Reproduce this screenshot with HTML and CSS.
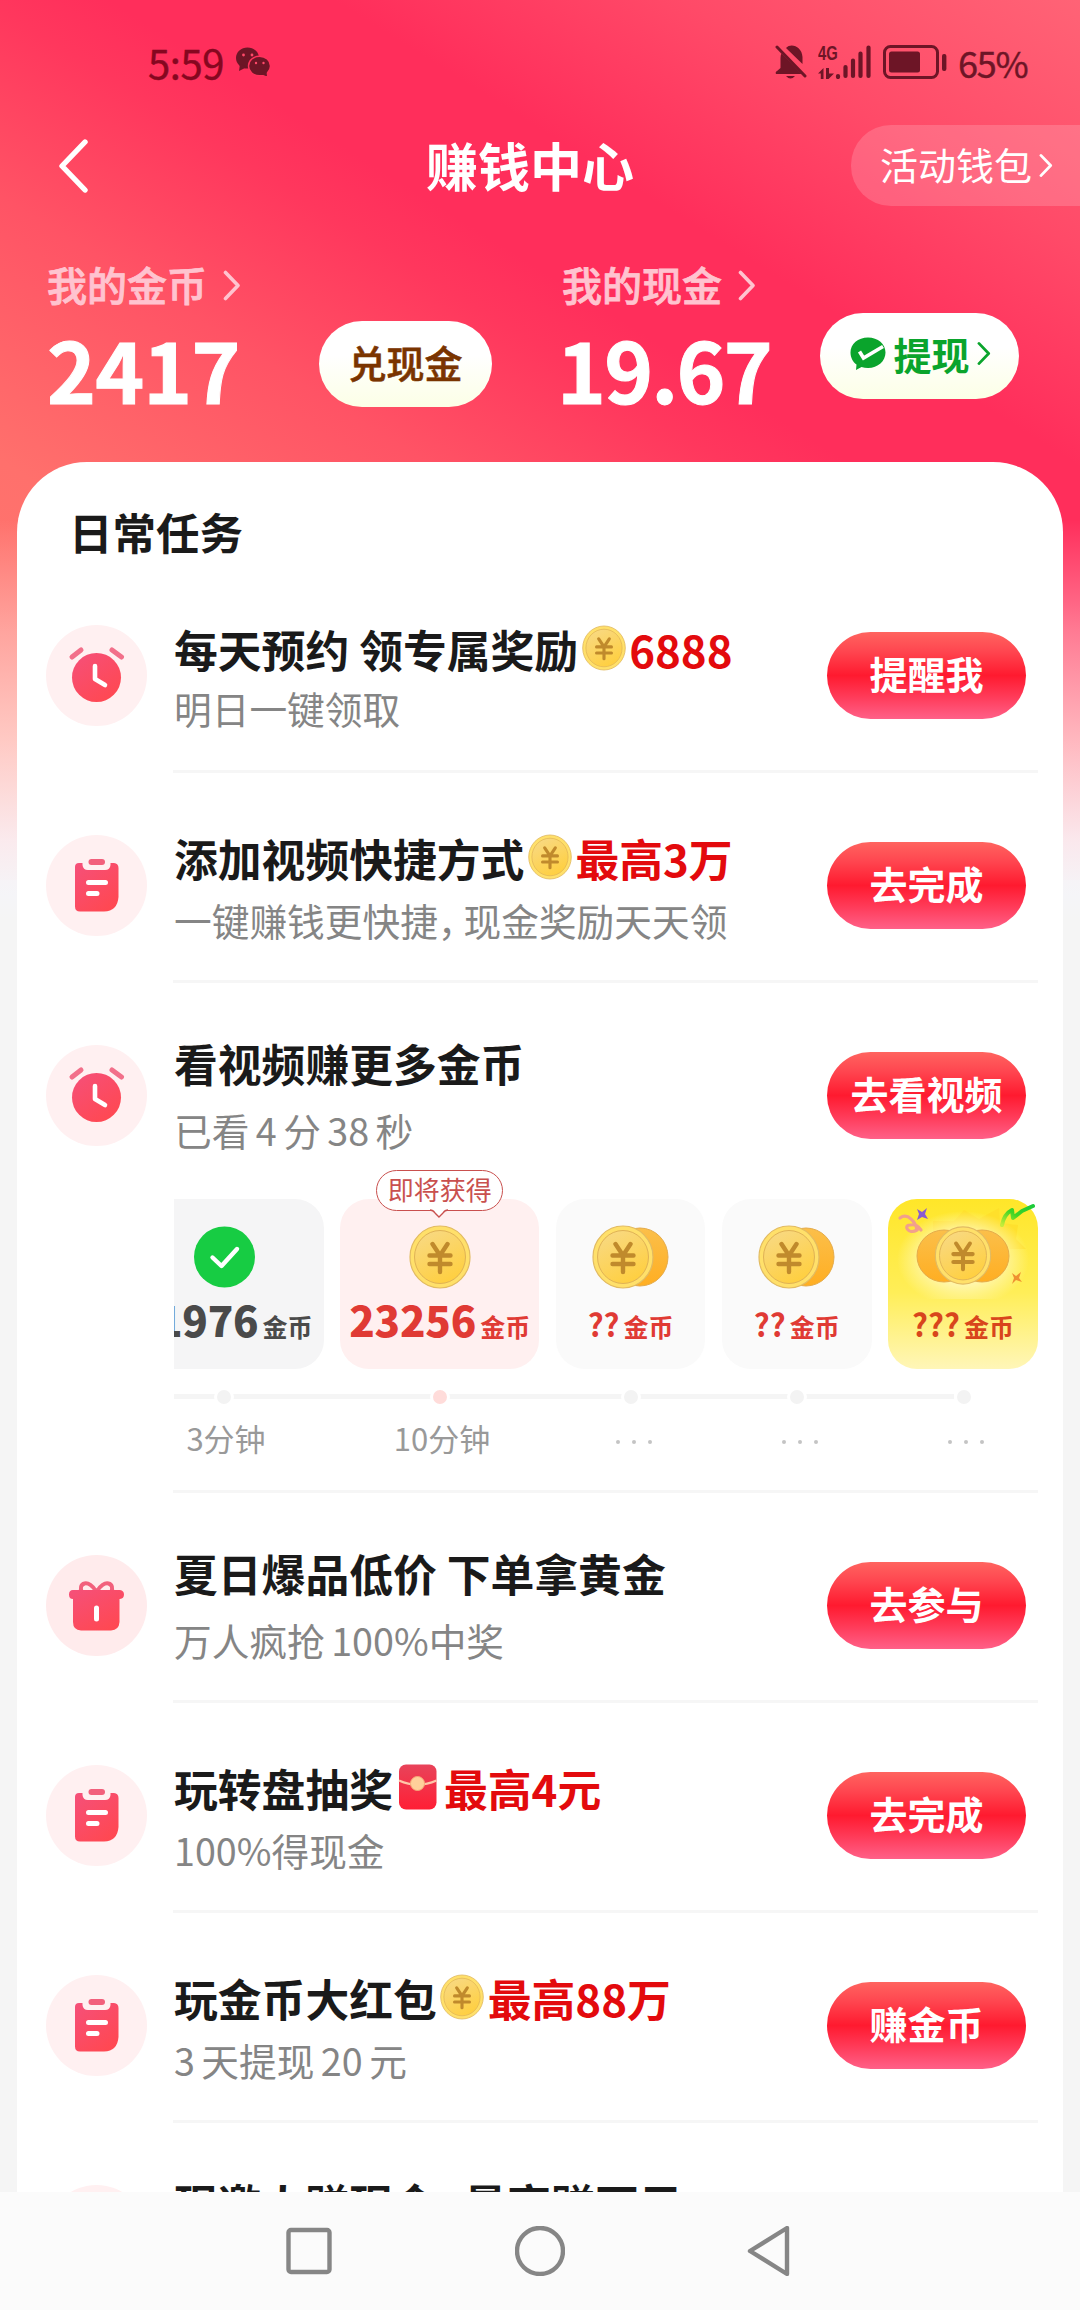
FILE: index.html
```html
<!DOCTYPE html>
<html lang="zh-CN">
<head>
<meta charset="utf-8">
<title>赚钱中心</title>
<link rel="stylesheet" href="styles.css">
</head>
<body>
<svg class="defs" width="0" height="0" aria-hidden="true">
  <defs>
    <linearGradient id="g-red" x1="0" y1="0" x2="0.7" y2="1"><stop offset="0" stop-color="#f5507a"/><stop offset="1" stop-color="#ff4852"/></linearGradient>
    <linearGradient id="g-coin" x1="0.2" y1="0" x2="0.7" y2="1"><stop offset="0" stop-color="#f8d983"/><stop offset="1" stop-color="#ffcf3e"/></linearGradient>
    <linearGradient id="g-back" x1="0" y1="0" x2="0" y2="1"><stop offset="0" stop-color="#fbbf4a"/><stop offset="1" stop-color="#ffae22"/></linearGradient>
    <linearGradient id="g-env" x1="0" y1="0" x2="0" y2="1"><stop offset="0" stop-color="#e8435a"/><stop offset="1" stop-color="#ff1f35"/></linearGradient>
    <linearGradient id="g-ribbon" x1="0" y1="1" x2="1" y2="0"><stop offset="0" stop-color="#c6ec3a"/><stop offset="0.5" stop-color="#3fd423"/><stop offset="1" stop-color="#1ccb3a"/></linearGradient>
    <radialGradient id="g-glow"><stop offset="0.55" stop-color="#fff6a8"/><stop offset="1" stop-color="#fff6a8" stop-opacity="0"/></radialGradient>
    <symbol id="coin" viewBox="0 0 62 64">
      <ellipse cx="31" cy="32" rx="30" ry="31" fill="#ffe06a" stroke="#e2bb62" stroke-width="1.2"/>
      <ellipse cx="31" cy="32" rx="25.5" ry="26.5" fill="url(#g-coin)" stroke="#e0b255" stroke-width="1"/>
      <path d="M23.500 19 31 30.500 38.500 19M31 30.500V47M20.500 30.500H41.500M20.500 39H41.500" fill="none" stroke="#c08a2c" stroke-width="4.400" stroke-linecap="round"/>
    </symbol>
    <symbol id="coins" viewBox="0 0 77 64">
      <ellipse cx="48" cy="32" rx="28" ry="29" fill="url(#g-back)" stroke="#e5ab4a" stroke-width="1"/>
      <use href="#coin" x="0" y="0" width="62" height="64"/>
    </symbol>
    <symbol id="clock" viewBox="0 0 101 101">
      <path d="M26 32 35 25M75.500 32 66 25" stroke="#f2708a" stroke-width="5" stroke-linecap="round"/>
      <circle cx="50.500" cy="52.500" r="24.500" fill="url(#g-red)"/>
      <path d="M49 41V54L59 60" fill="none" stroke="#fff" stroke-width="4.600" stroke-linecap="round" stroke-linejoin="round"/>
    </symbol>
    <symbol id="board" viewBox="0 0 101 101">
      <path d="M33 28H36.500V30Q37 35 42 35H59Q64 35 64.500 30V28H68Q72.500 28.500 72.500 33V62Q71.500 76 58 76.500H34Q29 76.500 29 71.500V32Q29 28 33 28Z" fill="url(#g-red)"/>
      <rect x="42.500" y="24" width="16.500" height="6" rx="3" fill="#f2607c"/>
      <path d="M42.500 47.500H59.500M42.500 58.500H51" stroke="#fff" stroke-width="5" stroke-linecap="round"/>
    </symbol>
    <symbol id="gift" viewBox="0 0 101 101">
      <path d="M36 38C31 28 43 23 50.500 37C58 23 70 28 65 38" fill="none" stroke="#f2607c" stroke-width="4"/>
      <path d="M27 35H74Q78 35.500 78 39.500T74 44H73.500V67Q73 75 65 75.500H35Q27 75 27 67V44Q23 44 23 39.500T27 35Z" fill="url(#g-red)"/>
      <path d="M50.500 53V64" stroke="#fff" stroke-width="5" stroke-linecap="round"/>
    </symbol>
    <symbol id="chev" viewBox="0 0 18 30"><path d="M2.500 2 15 15 2.500 28" fill="none" stroke="currentColor" stroke-width="3.600" stroke-linecap="round" stroke-linejoin="round"/></symbol>
  </defs>
</svg>

<main class="screen">
  <header class="hero">
    <div class="status">
      <span class="time">5:59</span>
      <svg class="wechat" viewBox="0 0 34 29"><ellipse cx="11.500" cy="11" rx="11.500" ry="10.500"/><path d="M4 17 3 24 11 20Z"/><ellipse cx="23.500" cy="19" rx="11" ry="9.800" stroke="#ff335c" stroke-width="1.400"/><path d="M25 27 31 29.500 30.500 24Z"/><g fill="#ff4a6a"><circle cx="7.500" cy="8" r="1.400"/><circle cx="16" cy="8" r="1.400"/><circle cx="20" cy="16" r="1.200"/><circle cx="27.500" cy="16" r="1.200"/></g></svg>
      <span class="grow"></span>
      <svg class="bell" viewBox="0 0 32 35"><path d="M11 4C16-1.500 27 2.500 27.500 13V20ZM6.500 9.500 26.500 30H1Q0 28 2 27L5.500 24V14Q5.500 11 6.500 9.500ZM11 32H20Q15.500 37 11 32Z"/><path class="slash" d="M2 3 30 32"/></svg>
      <div class="net"><span>4G</span><svg viewBox="0 0 16 11"><path d="M0 5.500 5.500 0V11H2.800V5.500ZM8 0H11V5.500H16L10.500 11H8Z"/></svg></div>
      <svg class="bars" viewBox="0 0 36 34"><path d="M3 32V31M10.500 31V22M18 31V15.500M25.500 31V8.500M33.500 31V2.500" fill="none" stroke-width="4.200" stroke-linecap="round"/></svg>
      <svg class="battery" viewBox="0 0 64 34"><rect x="1.500" y="1.500" width="53" height="31" rx="6" fill="none" stroke-width="3"/><rect x="6" y="6.500" width="31" height="21" rx="2.500"/><rect x="59" y="9" width="4.400" height="17" rx="2"/></svg>
      <span class="pct">65%</span>
    </div>
    <div class="topbar">
      <svg class="back" viewBox="0 0 30 54"><path d="M27 3 4 27 27 51" fill="none" stroke="#fff" stroke-width="5.400" stroke-linecap="round" stroke-linejoin="round"/></svg>
      <h1>赚钱中心</h1>
      <a class="wallet">活动钱包<svg class="chev-w"><use href="#chev"/></svg></a>
    </div>
    <div class="balances">
      <div class="bal coins-bal">
        <div class="label">我的金币<svg class="chev-b"><use href="#chev"/></svg></div>
        <div class="num">2417</div>
      </div>
      <a class="pill exchange">兑现金</a>
      <div class="bal cash-bal">
        <div class="label">我的现金<svg class="chev-b"><use href="#chev"/></svg></div>
        <div class="num cash">19.67</div>
      </div>
      <a class="pill withdraw"><svg class="pay" viewBox="0 0 36 33"><path d="M18 0.500C28 0.500 35.500 7 35.500 15.500S28 31 18 31Q14.500 31 11.500 30L6 33 6.500 27.500C2.500 25 0.500 20 0.500 15.500C0.500 7 8 0.500 18 0.500Z"/><path d="M9.500 14.500 13.500 21 33 9.500" fill="none" stroke="#fff" stroke-width="3.600"/></svg>提现<svg class="chev-p"><use href="#chev"/></svg></a>
    </div>
  </header>

  <section class="card">
    <h2>日常任务</h2>

    <article class="task remind">
      <svg class="icon"><use href="#clock"/></svg>
      <div class="body"><h3>每天预约 领专属奖励<svg class="coin-i"><use href="#coin"/></svg><em>6888</em></h3><p>明日一键领取</p></div>
      <a class="btn">提醒我</a>
    </article>

    <article class="task">
      <svg class="icon"><use href="#board"/></svg>
      <div class="body"><h3>添加视频快捷方式<svg class="coin-i"><use href="#coin"/></svg><em>最高3万</em></h3><p>一键赚钱更快捷<span class="comma">，</span>现金奖励天天领</p></div>
      <a class="btn">去完成</a>
    </article>

    <article class="task plain watch">
      <svg class="icon"><use href="#clock"/></svg>
      <div class="body"><h3>看视频赚更多金币</h3><p>已看 4 分 38 秒</p></div>
      <a class="btn">去看视频</a>
      <div class="track">
        <div class="step done"><svg class="pic" viewBox="0 0 61 61"><circle cx="30.500" cy="30.500" r="30.500" fill="#17cc43"/><path d="M18.500 31 27.500 39.500 43 22.500" fill="none" stroke="#fff" stroke-width="4.400" stroke-linecap="round" stroke-linejoin="round"/></svg><div class="amt"><b>1976</b>金币</div></div>
        <div class="step next"><div class="tip">即将获得<svg viewBox="0 0 18 10"><path d="M0 1Q3 1 5 4L9 8 13 4Q15 1 18 1" fill="#fff" stroke="#c9504e" stroke-width="1.300"/></svg></div><svg class="pic"><use href="#coin"/></svg><div class="amt"><b>23256</b>金币</div></div>
        <div class="step"><svg class="pic two"><use href="#coins"/></svg><div class="amt"><i>??</i>金币</div></div>
        <div class="step"><svg class="pic two"><use href="#coins"/></svg><div class="amt"><i>??</i>金币</div></div>
        <div class="step gold">
          <svg class="party" viewBox="0 0 150 100">
            <path d="M45 22 66 22 76 11 91 20 111 9 112 24 130 26 128 40 138 50H45Z" fill="#ffdd2a" opacity="0.7"/>
            <ellipse cx="75" cy="60" rx="66" ry="48" fill="url(#g-glow)"/>
            <ellipse cx="56" cy="57" rx="27" ry="26" fill="url(#g-back)" stroke="#e5ab4a"/><ellipse cx="94" cy="57" rx="27" ry="26" fill="url(#g-back)" stroke="#e5ab4a"/>
            <use href="#coin" x="46" y="27" width="58" height="59"/>
            <path d="M12 19C20 13 28 24 29 31C20 36 15 26 22 26C28 25 30 27 33 31" fill="none" stroke="#f2a08c" stroke-width="3.200" stroke-linecap="round"/>
            <path d="M29 10 34 13 39 9 37 15 40 20 34 18 29 21 31 15Z" fill="#8a5bd0"/>
            <path d="M114 26C116 16 122 12 124 11L125 19 134 12 145 7" fill="none" stroke="url(#g-ribbon)" stroke-width="4" stroke-linecap="round" stroke-linejoin="round"/>
            <path d="M124 74 128 77 133 73 131 79 134 83 128 81 124 85 126 79Z" fill="#ef9030"/>
          </svg>
          <div class="amt"><i>???</i>金币</div>
        </div>
      </div>
      <div class="line"><span></span><span class="hot"></span><span></span><span></span><span></span></div>
      <div class="times"><span>3分钟</span><span>10分钟</span><span class="dots"><i></i><i></i><i></i></span><span class="dots"><i></i><i></i><i></i></span><span class="dots"><i></i><i></i><i></i></span></div>
    </article>

    <article class="task plain">
      <svg class="icon deep"><use href="#gift"/></svg>
      <div class="body"><h3>夏日爆品低价 下单拿黄金</h3><p>万人疯抢 100%中奖</p></div>
      <a class="btn">去参与</a>
    </article>

    <article class="task">
      <svg class="icon"><use href="#board"/></svg>
      <div class="body"><h3>玩转盘抽奖<svg class="coin-i" viewBox="0 0 44 46"><rect x="3" y="0.500" width="37.500" height="45" rx="7" fill="url(#g-env)"/><path d="M3 16.500Q21.500 25 40.500 16.500" fill="none" stroke="#ffc6a8" stroke-width="2"/><circle cx="21.500" cy="19.500" r="7" fill="#ffcf9a" stroke="#f5a878"/></svg><em>最高4元</em></h3><p>100%得现金</p></div>
      <a class="btn">去完成</a>
    </article>

    <article class="task">
      <svg class="icon"><use href="#board"/></svg>
      <div class="body"><h3>玩金币大红包<svg class="coin-i"><use href="#coin"/></svg><em>最高88万</em></h3><p>3 天提现 20 元</p></div>
      <a class="btn">赚金币</a>
    </article>

    <article class="task plain">
      <svg class="icon"><use href="#clock"/></svg>
      <div class="body"><h3>现邀人赚现金<span class="comma big">，</span>最高赚万元</h3></div>
    </article>
  </section>

  <nav class="nav">
    <svg viewBox="0 0 50 50"><rect x="4.500" y="4" width="41" height="42" rx="2.500"/></svg>
    <svg viewBox="0 0 50 50"><circle cx="25" cy="25" r="23"/></svg>
    <svg viewBox="0 0 50 50"><path d="M41 2V48L4 25Z"/></svg>
  </nav>
</main>
</body>
</html>
```
FILE: styles.css
```css
* { box-sizing: border-box; }
body {
  margin: 0;
  font-family: "Noto Sans CJK SC", "Noto Sans", sans-serif;
  background: #f5f5f5;
  color: #1a1a1a;
}
h1, h2, h3, p { margin: 0; }
em, i { font-style: normal; }
.defs { position: absolute; }
.grow { flex: 1; }

.screen {
  width: 1080px;
  height: 2310px;
  overflow: hidden;
  display: flex;
  flex-direction: column;
  background:
    linear-gradient(180deg, rgba(255,240,236,0) 520px, rgba(255,240,236,.38) 630px, rgba(255,240,236,.68) 740px, rgba(250,240,244,.95) 840px, #f5f5f8 895px, #f5f5f5 920px),
    linear-gradient(32deg, #ff7c70 0, #ff706c 27%, #ff5365 44%, #ff375d 56%, #ff2e5b 61%, #ff2e5b 70%, #ff4a68 84%, #ff6376 100%) 0 0 / 1080px 880px no-repeat,
    #f5f5f5;
}

/* Header */
.hero { height: 462px; flex: none; display: flex; flex-direction: column; color: #fff; }
.status { height: 122px; padding: 1px 52px 0 148px; display: flex; align-items: center; color: #6d1526; fill: #6d1526; stroke: none; line-height: 50px; }
.status svg { flex: none; }
.time { font-size: 40px; color: #860720; letter-spacing: -.4px; -webkit-text-stroke: .4px #860720; }
.wechat { width: 34px; height: 29px; margin-left: 12px; }
.bell { width: 32px; height: 35px; }
.slash { stroke: #6d1526; stroke-width: 3px; stroke-linecap: round; }
.net { width: 19px; height: 34px; margin-left: 11px; display: flex; flex-direction: column; justify-content: space-between; }
.net span { font: 700 20px/17px "Liberation Sans", sans-serif; transform: scaleX(.74); transform-origin: left; }
.net svg { width: 16px; height: 11px; }
.bars { width: 36px; height: 34px; margin-left: -2px; stroke: #6d1526; }
.battery { width: 64px; height: 34px; margin-left: 12px; stroke: #6d1526; }
.battery rect:not([fill]) { stroke: none; }
.pct { font-size: 36px; margin-left: 11px; letter-spacing: -1.200px; width: 70px; white-space: nowrap; -webkit-text-stroke: .4px #6d1526; }

.topbar { height: 90px; display: grid; grid-template-columns: 310px 1fr 229px; align-items: center; }
.back { width: 30px; height: 54px; margin: -3px 0 0 58px; }
h1 { font-size: 52px; line-height: 80px; font-weight: 700; text-align: center; margin: -5px 101px 0 0; }
.wallet { height: 81px; border-radius: 40px 0 0 40px; background: rgba(255,255,255,.17); padding: 0 0 3px 29px; display: flex; align-items: center; font-size: 38px; line-height: 76px; margin-top: -3px; white-space: nowrap; }
.chev-w { width: 14px; height: 25px; margin: 2px 0 0 7px; }

.balances { flex: 1; padding-left: 47px; display: flex; align-items: flex-start; }
.bal { padding-top: 44px; }
.coins-bal { width: 272px; }
.cash-bal { width: 258px; margin-left: 70px; }
.label { display: flex; align-items: center; font-size: 40px; font-weight: 500; line-height: 56px; color: #ffc3cf; -webkit-text-stroke: .8px #ffc3cf; }
.chev-b { width: 18px; height: 31px; margin: 2px 0 0 16px; }
.num { font-size: 83px; line-height: 98px; font-weight: 700; white-space: nowrap; letter-spacing: -.8px; margin-top: 7px; -webkit-text-stroke: 1px #fff; }
.cash { letter-spacing: -1.800px; margin-left: -5px; }
.pill { display: flex; align-items: center; justify-content: center; height: 86px; border-radius: 43px; background: linear-gradient(#fff 40%, #fcffe6); font-weight: 700; font-size: 38px; padding-bottom: 5px; white-space: nowrap; }
.exchange { width: 173px; margin-top: 109px; color: #7a3400; font-weight: 500; -webkit-text-stroke: .6px #7a3400; }
.withdraw { width: 199px; margin-top: 101px; color: #0aa42c; padding-left: 2px; }
.pay { width: 36px; height: 33px; fill: #0aa42c; margin-right: 7px; }
.chev-p { width: 14px; height: 25px; margin-left: 7px; }

/* Task card */
.card { flex: 1; min-height: 0; overflow: hidden; margin: 0 17px; padding: 0 25px 0 29px; background: #fff; border-radius: 70px 70px 0 0; }
h2 { font-size: 43.500px; line-height: 60px; height: 99px; padding: 40px 0 0 23px; font-weight: 700; }
.task { height: 210px; display: grid; grid-template-columns: 128px minmax(0, 1fr) 199px; padding-right: 12px; position: relative; align-items: start; }
.task::after { content: ""; position: absolute; left: 127px; right: 0; bottom: -2px; height: 3px; background: #f6f6f6; }
.icon { width: 101px; height: 101px; border-radius: 50%; background: #fff0f1; margin-top: 64px; }
.icon.deep { background: #ffebec; }
.body { padding-top: 61px; white-space: nowrap; }
.plain .body { padding-top: 56px; }
h3 { display: flex; align-items: center; font-size: 43.800px; line-height: 52px; height: 52px; font-weight: 700; white-space: pre; }
h3 em { color: #e30a0d; }
.coin-i { width: 44px; height: 46px; margin: -2px 3.500px 0; flex: none; }
p { font-size: 37.700px; line-height: 46px; margin-top: 13px; color: #858585; word-spacing: -2px; font-weight: 400; }
.plain p { margin-top: 18px; }
.remind .body { padding-top: 62px; }
.remind p { margin-top: 10px; }
.comma { margin-right: -12px; }
.comma.big { margin-right: -17px; }
.btn { height: 87px; margin-top: 71px; border-radius: 44px; display: flex; align-items: center; justify-content: center; padding-bottom: 6px; font-size: 38px; font-weight: 700; color: #fff; background: linear-gradient(#ff645f, #ff4650 22%, #ff1a2f 50%, #ff3a58 74%, #ff6088); }

/* Watch-time steps */
.watch { height: 510px; grid-template-rows: 218px 170px 1fr; }
.track { grid-column: 2 / 4; grid-row: 2; width: 866px; display: flex; gap: 16.700px; }
.step { position: relative; width: 149.500px; height: 170px; flex: none; border-radius: 29px; background: #fafafa; display: flex; flex-direction: column; align-items: center; color: #e03a34; }
.pic { width: 62px; height: 64px; margin-top: 26px; flex: none; }
.pic.two { width: 77px; }
.amt { display: flex; align-items: baseline; justify-content: center; gap: 4px; font-size: 25px; line-height: 50px; font-weight: 700; white-space: nowrap; margin-top: 5px; }
.amt b { font-size: 42px; letter-spacing: -.2px; }
.amt i { font-size: 31px; line-height: 54px; }
.done { background: #f5f5f6; border-radius: 0 29px 29px 0; color: #4a4a4a; overflow: hidden; align-items: flex-end; padding-right: 11px; }
.done .pic { margin-right: 58px; width: 61px; }
.next { width: 199px; background: #fff0f0; }
.tip { position: absolute; left: 36px; top: -29px; width: 127px; height: 41px; border: 1.500px solid #c9504e; border-radius: 21px; background: #fff; color: #c9504e; font-size: 26px; line-height: 36px; text-align: center; }
.tip svg { position: absolute; left: 53px; bottom: -9px; width: 18px; height: 10px; }
.gold { background: linear-gradient(#ffe629, #ffee58 55%, #fff6b8); color: #d8451c; }
.party { width: 150px; height: 100px; margin-bottom: -10px; flex: none; }
.step:nth-child(n+3) .amt { margin-top: 8px; }
.line { grid-column: 2 / 4; grid-row: 3; width: 780px; height: 5px; margin-top: 25px; background: #f5f5f5; position: relative; }
.line span { position: absolute; top: -7px; width: 20px; height: 20px; border-radius: 50%; background: #f3f3f3; border: 3px solid #fff; }
.line span:nth-child(1) { left: 40px; }
.line span:nth-child(2) { left: 256px; }
.line span:nth-child(3) { left: 447px; }
.line span:nth-child(4) { left: 613px; }
.line span:nth-child(5) { left: 780px; }
.line .hot { background: #ffdcda; }
.times { grid-column: 2 / 4; grid-row: 3; width: 818px; margin-top: 46px; display: grid; grid-template-columns: 104px 328px 54px 278px 54px; color: #999; font-size: 31px; line-height: 46px; text-align: center; }
.times .dots { display: flex; justify-content: center; align-items: center; gap: 12px; padding: 7px 0 0 2px; }
.dots i { width: 4px; height: 4px; border-radius: 50%; background: #c4c4c4; }

/* System navigation */
.nav { height: 118px; flex: none; background: #fbfbfb; display: flex; justify-content: center; gap: 181px; align-items: center; fill: none; stroke: #868686; stroke-width: 4.400; stroke-linejoin: round; }
.nav svg { width: 50px; height: 50px; }
```
